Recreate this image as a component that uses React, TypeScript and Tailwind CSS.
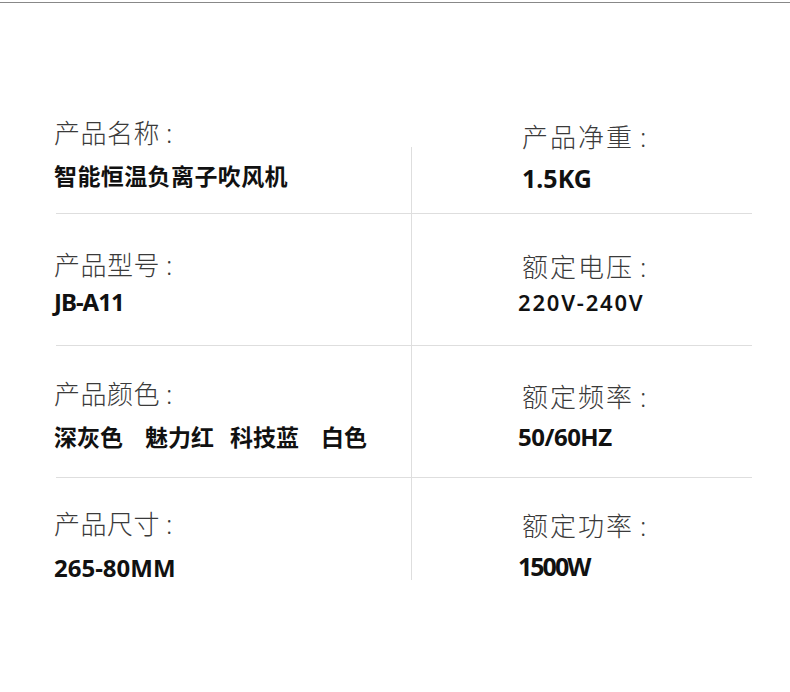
type Spec = {
  label: string;
  value: React.ReactNode;
  pad: string;
  gap: string;
  valueCls: string;
  last?: boolean;
};

const left: Spec[] = [
  { label: "产品名称", value: "智能恒温负离子吹风机", pad: "pt-[38px]", gap: "mt-[16px]", valueCls: "text-[23px] tracking-[0.4px]" },
  { label: "产品型号", value: "JB-A11", pad: "pt-[38px]", gap: "mt-[10px]", valueCls: "text-[24px] tracking-[-1px]" },
  {
    label: "产品颜色",
    value: (
      <span className="flex">
        <span className="mr-[22px]">深灰色</span>
        <span className="mr-[16px]">魅力红</span>
        <span className="mr-[22px]">科技蓝</span>
        <span>白色</span>
      </span>
    ),
    pad: "pt-[35px]",
    gap: "mt-[16px]",
    valueCls: "text-[23px]",
  },
  { label: "产品尺寸", value: "265-80MM", pad: "pt-[33px]", gap: "mt-[17px]", valueCls: "text-[24px]", last: true },
];

const right: Spec[] = [
  { label: "产品净重", value: "1.5KG", pad: "pt-[42px]", gap: "mt-[14px]", valueCls: "text-[25px]" },
  { label: "额定电压", value: "220V-240V", pad: "pt-[40px]", gap: "mt-[8px]", valueCls: "text-[22px] tracking-[1.8px] font-semibold -ml-[4px]" },
  { label: "额定频率", value: "50/60HZ", pad: "pt-[38px]", gap: "mt-[13px]", valueCls: "text-[24px] tracking-[-0.5px] -ml-[4px]" },
  { label: "额定功率", value: "1500W", pad: "pt-[35px]", gap: "mt-[13px]", valueCls: "text-[25px] tracking-[-2px] -ml-[4px]", last: true },
];

function Cell({ s, right }: { s: Spec; right?: boolean }) {
  return (
    <div className={`h-[132px] ${s.pad} ${right ? "pl-[110px]" : ""} ${s.last ? "" : "border-b border-[#dedede]"}`}>
      <div className={right ? "" : "-ml-[2px]"}>
        <div
          className={`text-[26px] leading-[26px] font-light text-[#3a3a3a] ${
            right ? "tracking-[2px]" : "tracking-[0.5px]"
          }`}
        >
          {s.label}
          <span className={right ? "ml-[6px]" : "ml-[6px]"}>:</span>
        </div>
        <div className={`${s.gap} leading-[28px] font-bold text-[#111] ${s.valueCls}`}>{s.value}</div>
      </div>
    </div>
  );
}

export default function App() {
  return (
    <div
      className="w-[790px] h-[692px] bg-white overflow-hidden"
      style={{ fontFamily: '"Noto Sans", "Noto Sans CJK SC", sans-serif' }}
    >
      <div className="pt-[2px]">
        <div className="h-px bg-[#888]" />
      </div>
      <div className="flex pl-[56px] pt-[79px]">
        <div className="w-[355px]">
          {left.map((s) => (
            <Cell key={s.label} s={s} />
          ))}
        </div>
        <div className="w-px bg-[#dedede] mt-[65px] h-[433px]" />
        <div className="w-[340px]">
          {right.map((s) => (
            <Cell key={s.label} s={s} right />
          ))}
        </div>
      </div>
    </div>
  );
}
